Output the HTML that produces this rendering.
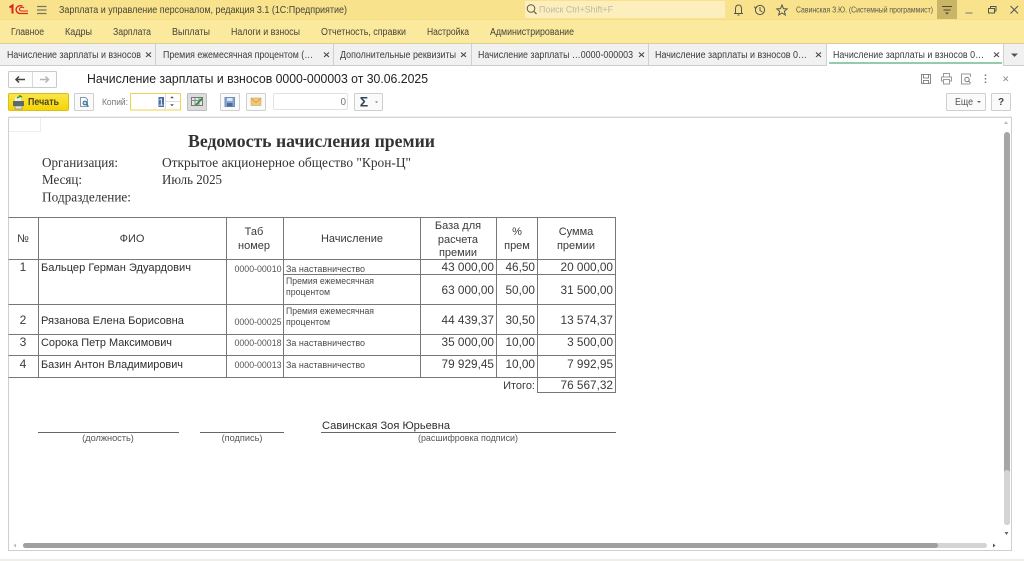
<!DOCTYPE html>
<html lang="ru"><head><meta charset="utf-8"><title>Начисление зарплаты и взносов</title>
<style>
html,body{margin:0;padding:0;background:#fff;width:1024px;height:561px;overflow:hidden}
svg{display:block;position:absolute;left:0;top:0;filter:blur(.3px)}
text{font-family:"Liberation Sans",sans-serif;fill:#333}
.s{font-family:"Liberation Serif",serif;fill:#333}
.m{font-size:9.8px;fill:#45453a}
.tab{font-size:9.8px;fill:#3c3c3c}
.h{font-size:11px;text-anchor:middle;fill:#3a3a3a}
.n{font-size:11px;fill:#2e2e2e}
.r{font-size:11.8px;text-anchor:end;fill:#3a3a3a}
.c{font-size:9.2px;text-anchor:middle;fill:#555}
.d{font-size:8.8px;fill:#4a4a4a}
.g{font-size:9.2px;text-anchor:middle;fill:#555}
.b{fill:#fafafa;stroke:#cfcfcf}
.i{fill:none;stroke:#555;stroke-width:1}
.l{stroke:#777;stroke-width:1;fill:none}
</style></head><body>
<svg width="1024" height="561" viewBox="0 0 1024 561" xmlns="http://www.w3.org/2000/svg">
<defs><linearGradient id="y" x1="0" y1="0" x2="0" y2="1"><stop offset="0" stop-color="#fbe64a"/><stop offset="1" stop-color="#f5d400"/></linearGradient></defs>
<!-- header -->
<rect width="1024" height="19" fill="#f9e28c"/>
<rect y="19" width="1024" height="24" fill="#fbe99d"/>
<rect y="19" width="1024" height="1" fill="#f5df85"/>
<rect y="43" width="1024" height="1" fill="#dccf94"/>
<rect y="44" width="1024" height="21" fill="#f1f1f1"/>
<rect y="65" width="1024" height="1" fill="#cdcdcd"/>
<!-- 1C logo -->
<path d="M9.500 7.500L12.500 5.500V13.500" fill="none" stroke="#d8261c" stroke-width="2"/>
<path d="M22.500 6A4.500 4 0 1 0 19.500 13.500H28" fill="none" stroke="#d8261c" stroke-width="1.300"/>
<path d="M24 8A2.500 2 0 1 0 21 11H28" fill="none" stroke="#d8261c" stroke-width="1.100"/>
<path d="M37 6.500H46.500M37 10H46.500M37 13.500H46.500" stroke="#77775f" stroke-width="1.200"/>
<text x="59" y="13" class="m" textLength="288" lengthAdjust="spacingAndGlyphs">Зарплата и управление персоналом, редакция 3.1  (1С:Предприятие)</text>
<!-- search -->
<rect x="525" y="1" width="200" height="17" fill="#fcefbd"/>
<circle cx="531" cy="8.500" r="3.800" class="i"/><path d="M534 11.500L536.500 14" stroke="#555" stroke-width="1.200"/>
<text x="539" y="12.500" font-size="9" style="fill:#bdb9a0" textLength="74" lengthAdjust="spacingAndGlyphs">Поиск Ctrl+Shift+F</text>
<!-- header icons -->
<path d="M734 13.500H743M735.500 13V9Q735.500 5 738.500 5Q741.500 5 741.500 9V13M737.500 15H739.500" class="i"/>
<circle cx="760" cy="10" r="4.600" class="i"/><path d="M760 7V10.500L762.500 12" class="i"/><path d="M754.500 6.500L755.500 8.500L757 6.500" class="i"/>
<path d="M782 5L783.500 8.600L787.200 8.900L784.400 11.300L785.300 15L782 13L778.700 15L779.600 11.300L776.800 8.900L780.500 8.600Z" class="i"/>
<text x="796" y="12.500" font-size="7.800" style="fill:#58574a" textLength="137" lengthAdjust="spacingAndGlyphs">Савинская З.Ю. (Системный программист)</text>
<rect x="937" y="0" width="20" height="19" fill="#c8b568"/>
<path d="M942 6.500H952M943.500 10H950.500" stroke="#4e4a30" stroke-width="1"/><path d="M945 12.500H949L947 14.500Z" fill="#4e4a30"/>
<path d="M965.500 13H972.500" stroke="#777" stroke-width="1"/>
<path d="M988.500 8.500H994.500V13H988.500ZM990.500 8V6.500H996V11H995" class="i"/>
<path d="M1010.500 6L1018 13.500M1018 6L1010.500 13.500" stroke="#555" stroke-width="1"/>
<!-- menu -->
<text x="11" y="35" class="m" textLength="33" lengthAdjust="spacingAndGlyphs">Главное</text>
<text x="65" y="35" class="m" textLength="27" lengthAdjust="spacingAndGlyphs">Кадры</text>
<text x="113" y="35" class="m" textLength="38" lengthAdjust="spacingAndGlyphs">Зарплата</text>
<text x="172" y="35" class="m" textLength="38" lengthAdjust="spacingAndGlyphs">Выплаты</text>
<text x="231" y="35" class="m" textLength="69" lengthAdjust="spacingAndGlyphs">Налоги и взносы</text>
<text x="321" y="35" class="m" textLength="85" lengthAdjust="spacingAndGlyphs">Отчетность, справки</text>
<text x="427" y="35" class="m" textLength="42" lengthAdjust="spacingAndGlyphs">Настройка</text>
<text x="490" y="35" class="m" textLength="84" lengthAdjust="spacingAndGlyphs">Администрирование</text>
<!-- tabs -->
<rect x="827" y="44" width="176" height="22" fill="#fff"/>
<rect x="829" y="62.500" width="173" height="1" fill="#2a9a55"/>
<path d="M155.500 44V65M333.500 44V65M471.500 44V65M648.500 44V65M826.500 44V65M1003.500 44V65" stroke="#cfcfcf"/>
<text x="7" y="58" class="tab" textLength="134" lengthAdjust="spacingAndGlyphs">Начисление зарплаты и взносов</text>
<text x="163" y="58" class="tab" textLength="150" lengthAdjust="spacingAndGlyphs">Премия ежемесячная процентом (…</text>
<text x="340" y="58" class="tab" textLength="116" lengthAdjust="spacingAndGlyphs">Дополнительные реквизиты</text>
<text x="478" y="58" class="tab" textLength="155" lengthAdjust="spacingAndGlyphs">Начисление зарплаты …0000-000003</text>
<text x="655" y="58" class="tab" textLength="152" lengthAdjust="spacingAndGlyphs">Начисление зарплаты и взносов 0…</text>
<text x="833" y="58" class="tab" textLength="151" lengthAdjust="spacingAndGlyphs">Начисление зарплаты и взносов 0…</text>
<path d="M146 52.500L151 57M151 52.500L146 57M324 52.500L329 57M329 52.500L324 57M461 52.500L466 57M466 52.500L461 57M639 52.500L644 57M644 52.500L639 57M816 52.500L821 57M821 52.500L816 57M994 52.500L999 57M999 52.500L994 57" stroke="#444" stroke-width="1.100"/>
<path d="M1011 53.500H1018L1014.500 57Z" fill="#555"/>
<!-- nav -->
<rect x="8.500" y="71.500" width="48" height="16" rx="1" fill="#fdfdfd" stroke="#c9c9c9"/>
<path d="M32.500 72V87" stroke="#d8d8d8"/>
<path d="M16 79.500H25M19 76.500L16 79.500L19 82.500" fill="none" stroke="#444" stroke-width="1.500"/>
<path d="M40 79.500H48.500M45.500 76.500L48.500 79.500L45.500 82.500" fill="none" stroke="#b5b5b5" stroke-width="1.500"/>
<text x="87" y="83" font-size="13" style="fill:#222" textLength="341" lengthAdjust="spacingAndGlyphs">Начисление зарплаты и взносов 0000-000003 от 30.06.2025</text>
<!-- right icons -->
<path d="M921.500 74.500H930.500V83.500H921.500ZM923.500 75V78H928.500V75M923.500 83V80.500H928.500V83" stroke="#888" fill="none"/>
<path d="M943.500 76.500V73.500H949.500V76.500M943.500 81H941.500V77H951.500V81H949.500M943.500 79.500H949.500V84H943.500Z" stroke="#999" fill="none"/>
<path d="M970.500 84H961.500V74H970.500V77" stroke="#999" fill="none"/><circle cx="967" cy="79.500" r="2.200" stroke="#777" fill="none"/><path d="M968.500 81L970.500 83" stroke="#777"/>
<path d="M985.500 74.500V76M985.500 78V79.500M985.500 81.500V83" stroke="#777" stroke-width="1.500"/>
<path d="M1003.500 76.500L1008 81M1008 76.500L1003.500 81" stroke="#999"/>
<!-- toolbar -->
<rect x="8.500" y="93.500" width="60" height="17" rx="1.500" fill="url(#y)" stroke="#d9bd1a"/>
<rect x="13" y="101" width="11" height="5" fill="#5c6a6a"/><rect x="15" y="106" width="7" height="3" fill="#dfe6e6" stroke="#5c6a6a" stroke-width=".5"/><rect x="15" y="97" width="6" height="4" fill="#eee"/><path d="M17 98L21 96M19 95.500L22 97" stroke="#2b9a3c" stroke-width="1.500"/>
<text x="28" y="105" font-size="9.800" font-weight="bold" style="fill:#4a4520" textLength="31" lengthAdjust="spacingAndGlyphs">Печать</text>
<rect x="74.500" y="93.500" width="19" height="17" rx="1" class="b"/>
<path d="M80.500 97.500H85.500L87.500 99.500V106.500H80.500Z" fill="#fff" stroke="#8a98a8"/><circle cx="85" cy="103" r="1.900" fill="#bde" stroke="#226a9a"/><path d="M86.500 104.500L88.500 106.500" stroke="#226a9a" stroke-width="1.200"/>
<text x="102" y="105" font-size="9.500" style="fill:#777" textLength="26" lengthAdjust="spacingAndGlyphs">Копий:</text>
<rect x="130.500" y="93.500" width="50" height="16.500" fill="#fff" stroke="#f2d250"/>
<rect x="158.500" y="97" width="5.500" height="10" fill="#4a6aa8"/>
<text x="161.200" y="105.500" font-size="10" text-anchor="middle" style="fill:#fff">1</text>
<path d="M165.500 94V109M166 101.500H180" stroke="#ddd"/>
<path d="M170.500 98H173.500L172 96.500ZM170.500 104.500H173.500L172 106Z" fill="#555" stroke="#555" stroke-width=".5"/>
<rect x="187.500" y="93.500" width="19" height="17" rx="1" fill="#dcdcdc" stroke="#bdbdbd"/>
<rect x="191.500" y="97.500" width="11" height="8" fill="#e8e8e8" stroke="#777"/><path d="M191 100.500H203M195 98V106M199 98V106" stroke="#888"/><path d="M196 105L202 98.500" stroke="#2b9a3c" stroke-width="2"/>
<rect x="220.500" y="93.500" width="19" height="17" rx="1" class="b"/>
<path d="M225 97.500H234.500V106.500H225Z" fill="#86a6cf" stroke="#6f8fb8"/><rect x="227" y="98" width="5.500" height="3" fill="#dce7f3"/><rect x="227" y="103" width="5.500" height="3.500" fill="#4e6c96"/>
<rect x="246.500" y="93.500" width="19" height="17" rx="1" class="b"/>
<rect x="251" y="98" width="10" height="7.500" fill="#f0c878" stroke="#d6a850" stroke-width=".6"/><path d="M251 98.500L256 102.500L261 98.500" fill="none" stroke="#c99a40" stroke-width=".8"/>
<rect x="273.500" y="93.500" width="74" height="16" rx="1.500" fill="#fff" stroke="#e2e2e2"/>
<text x="346" y="105" font-size="10" text-anchor="end" style="fill:#777">0</text>
<rect x="354.500" y="93.500" width="28" height="17" rx="1" class="b"/>
<text x="364" y="106.500" font-size="14" font-weight="bold" text-anchor="middle" style="fill:#32465a">Σ</text>
<path d="M375 101.500H378L376.500 103Z" fill="#666"/>
<rect x="946.500" y="93.500" width="39" height="17" rx="1" class="b"/>
<text x="955" y="105" font-size="10.500" style="fill:#555" textLength="18" lengthAdjust="spacingAndGlyphs">Еще</text>
<path d="M977 101H981L979 103Z" fill="#666"/>
<rect x="991.500" y="93.500" width="19" height="17" rx="1" class="b"/>
<text x="1001" y="105" font-size="10" font-weight="bold" text-anchor="middle" style="fill:#444">?</text>
<!-- report frame -->
<path d="M8.500 117.500H1011.500V550.500H8.500Z" fill="#fff" stroke="#cfcfcf"/>
<path d="M8.500 117H1011.500" stroke="#dedede"/>
<path d="M40.500 118V131.500H9" fill="none" stroke="#ededed"/>
<text x="188" y="147" class="s" font-size="17.500" font-weight="bold" textLength="247" lengthAdjust="spacingAndGlyphs">Ведомость начисления премии</text>
<text x="42" y="167" class="s" font-size="14" textLength="76" lengthAdjust="spacingAndGlyphs">Организация:</text>
<text x="162" y="167" class="s" font-size="14" textLength="249" lengthAdjust="spacingAndGlyphs">Открытое акционерное общество "Крон-Ц"</text>
<text x="42" y="184" class="s" font-size="14" textLength="40" lengthAdjust="spacingAndGlyphs">Месяц:</text>
<text x="162" y="184" class="s" font-size="14" textLength="60" lengthAdjust="spacingAndGlyphs">Июль 2025</text>
<text x="42" y="201.500" class="s" font-size="14" textLength="89" lengthAdjust="spacingAndGlyphs">Подразделение:</text>
<!-- table lines -->
<path class="l" d="M8.500 217.500H615.500V377.500H8.500M8.500 259.500H615.500M283.500 274.500H615.500M8.500 304.500H615.500M8.500 334.500H615.500M8.500 355.500H615.500M38.500 217.500V377.500M226.500 217.500V377.500M283.500 217.500V377.500M420.500 217.500V377.500M496.500 217.500V377.500M537.500 217.500V392.500H615.500V377.500"/>
<!-- table header -->
<text x="23" y="242" class="h">№</text>
<text x="132" y="242" class="h">ФИО</text>
<text x="254" y="235" class="h">Таб</text><text x="254" y="249" class="h">номер</text>
<text x="352" y="242" class="h">Начисление</text>
<text x="458" y="229" class="h">База для</text><text x="458" y="243" class="h">расчета</text><text x="458" y="256" class="h">премии</text>
<text x="517" y="235" class="h">%</text><text x="517" y="249" class="h">прем</text>
<text x="576" y="235" class="h">Сумма</text><text x="576" y="249" class="h">премии</text>
<!-- rows -->
<text x="23" y="271" class="h" style="font-size:12px">1</text>
<text x="41" y="271" class="n" textLength="150" lengthAdjust="spacingAndGlyphs">Бальцер Герман Эдуардович</text>
<text x="258" y="272" class="c" textLength="47" lengthAdjust="spacingAndGlyphs">0000-00010</text>
<text x="286" y="272" class="d" textLength="79" lengthAdjust="spacingAndGlyphs">За наставничество</text>
<text x="494" y="271" class="r">43 000,00</text><text x="535" y="271" class="r">46,50</text><text x="613" y="271" class="r">20 000,00</text>
<text x="286" y="284" class="d" textLength="88" lengthAdjust="spacingAndGlyphs">Премия ежемесячная</text>
<text x="286" y="295" class="d" textLength="44" lengthAdjust="spacingAndGlyphs">процентом</text>
<text x="494" y="294" class="r">63 000,00</text><text x="535" y="294" class="r">50,00</text><text x="613" y="294" class="r">31 500,00</text>
<text x="23" y="324" class="h" style="font-size:12px">2</text>
<text x="41" y="324" class="n" textLength="143" lengthAdjust="spacingAndGlyphs">Рязанова Елена Борисовна</text>
<text x="258" y="325" class="c" textLength="47" lengthAdjust="spacingAndGlyphs">0000-00025</text>
<text x="286" y="314" class="d" textLength="88" lengthAdjust="spacingAndGlyphs">Премия ежемесячная</text>
<text x="286" y="325" class="d" textLength="44" lengthAdjust="spacingAndGlyphs">процентом</text>
<text x="494" y="324" class="r">44 439,37</text><text x="535" y="324" class="r">30,50</text><text x="613" y="324" class="r">13 574,37</text>
<text x="23" y="346" class="h" style="font-size:12px">3</text>
<text x="41" y="346" class="n" textLength="131" lengthAdjust="spacingAndGlyphs">Сорока Петр Максимович</text>
<text x="258" y="346" class="c" textLength="47" lengthAdjust="spacingAndGlyphs">0000-00018</text>
<text x="286" y="346" class="d" textLength="79" lengthAdjust="spacingAndGlyphs">За наставничество</text>
<text x="494" y="346" class="r">35 000,00</text><text x="535" y="346" class="r">10,00</text><text x="613" y="346" class="r">3 500,00</text>
<text x="23" y="368" class="h" style="font-size:12px">4</text>
<text x="41" y="368" class="n" textLength="142" lengthAdjust="spacingAndGlyphs">Базин Антон Владимирович</text>
<text x="258" y="368" class="c" textLength="47" lengthAdjust="spacingAndGlyphs">0000-00013</text>
<text x="286" y="368" class="d" textLength="79" lengthAdjust="spacingAndGlyphs">За наставничество</text>
<text x="494" y="368" class="r">79 929,45</text><text x="535" y="368" class="r">10,00</text><text x="613" y="368" class="r">7 992,95</text>
<text x="535" y="389" class="r" style="font-size:11px">Итого:</text>
<text x="613" y="389" class="r">76 567,32</text>
<!-- signatures -->
<path d="M38 432.500H179M200 432.500H284M321 432.500H616" stroke="#666"/>
<text x="322" y="429" class="n" textLength="128" lengthAdjust="spacingAndGlyphs">Савинская Зоя Юрьевна</text>
<text x="108" y="441" class="g">(должность)</text>
<text x="242" y="441" class="g">(подпись)</text>
<text x="468" y="441" class="g" textLength="100" lengthAdjust="spacingAndGlyphs">(расшифровка подписи)</text>
<!-- scrollbars -->
<path d="M1004.500 124L1006.500 121L1008.500 124Z" fill="#bbb" transform="translate(-0.500 0)"/>
<rect x="1004" y="132" width="6" height="393" rx="3" fill="#a6a6a6"/>
<rect x="1004" y="470" width="6" height="55" rx="3" fill="#d4d4d4"/>
<path d="M1004.500 532H1008.500L1006.500 535Z" fill="#666"/>
<path d="M13.500 545.500L16 543.500V547.500Z" fill="#bbb"/>
<rect x="23" y="543" width="964" height="5" rx="2.500" fill="#d4d4d4"/>
<rect x="23" y="543" width="915" height="5" rx="2.500" fill="#a0a0a0"/>
<path d="M993 543.500L995.500 545.500L993 547.500Z" fill="#555"/>
<rect y="559" width="1024" height="2" fill="#efeee8"/>
</svg>
</body></html>
